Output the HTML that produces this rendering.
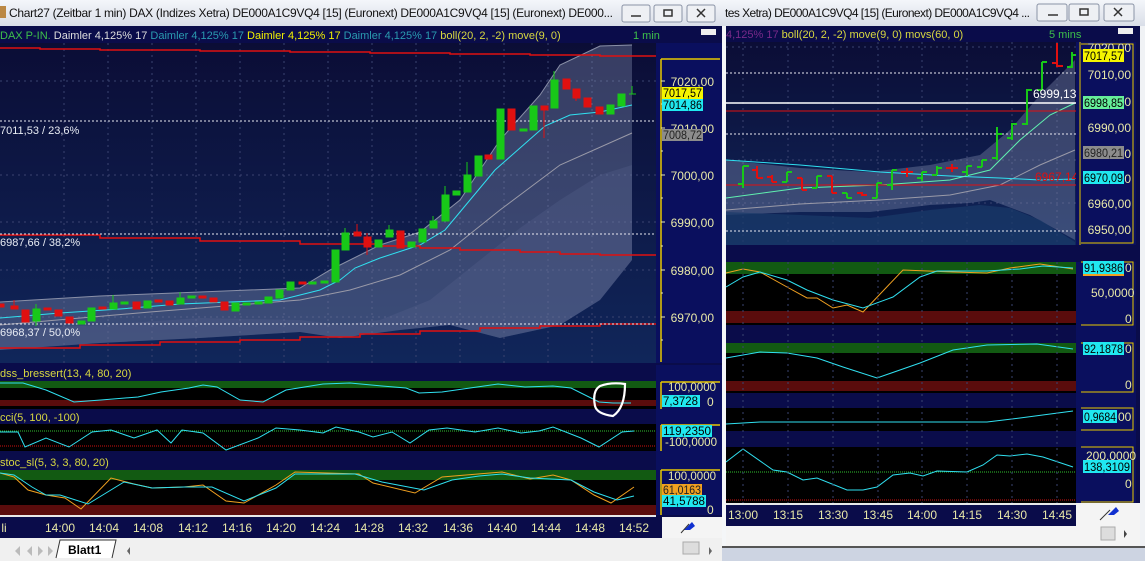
<!DOCTYPE html>
<html><head><meta charset="utf-8"><style>
html,body{margin:0;padding:0;width:1145px;height:561px;overflow:hidden;background:#d6dbe6}
svg{display:block;font-family:"Liberation Sans",sans-serif}
</style></head><body>
<svg width="1145" height="561" viewBox="0 0 1145 561" xmlns="http://www.w3.org/2000/svg">
<defs>
<linearGradient id="tb" x1="0" y1="0" x2="0" y2="1"><stop offset="0" stop-color="#f4f6fa"/><stop offset="1" stop-color="#d9dee8"/></linearGradient>
<linearGradient id="pl" x1="0" y1="0" x2="0" y2="1"><stop offset="0" stop-color="#0b0d36"/><stop offset="1" stop-color="#10265a"/></linearGradient>
</defs>
<!-- LEFT WINDOW -->
<rect x="0" y="0" width="722" height="26" fill="url(#tb)"/>
<rect x="0" y="6" width="6" height="12" fill="#b84"/>
<text x="9" y="17" font-size="12" fill="#111" textLength="604">Chart27 (Zeitbar 1 min)  DAX (Indizes Xetra) DE000A1C9VQ4 [15] (Euronext) DE000A1C9VQ4 [15] (Euronext) DE000...</text>
<g fill="#eef0f4" stroke="#8a93a6"><rect x="622" y="5" width="28" height="17" rx="2"/><rect x="654" y="5" width="28" height="17" rx="2"/><rect x="687" y="5" width="28" height="17" rx="2"/></g>
<path d="M631 16h10M664 10h8v6h-8zM697 9l8 8M705 9l-8 8" stroke="#333" stroke-width="1.5" fill="none"/>
<rect x="0" y="26" width="722" height="512" fill="#0a0c4a"/>
<rect x="0" y="43" width="656" height="320" fill="url(#pl)"/>
<text x="0" y="39" font-size="11"><tspan fill="#3ec04a">DAX P-IN. </tspan><tspan fill="#ddd">Daimler  4,125% 17 </tspan><tspan fill="#2a9bb0">Daimler  4,125% 17 </tspan><tspan fill="#f0f000">Daimler  4,125% 17 </tspan><tspan fill="#2a9bb0">Daimler  4,125% 17 </tspan><tspan fill="#d8d840">boll(20, 2, -2) move(9, 0)</tspan></text>
<text x="633" y="39" font-size="11" fill="#3ec04a">1 min</text>
<rect x="701" y="29" width="15" height="6" fill="#eee"/>
<g stroke="#3a4370" stroke-dasharray="2,4" stroke-width="1">
<path d="M0 81H656M0 175H656M0 222H656M0 270H656M0 317H656"/>
<path d="M64 43V363M108 43V363M152 43V363M196 43V363M240 43V363M284 43V363M328 43V363M372 43V363M416 43V363M460 43V363M504 43V363M548 43V363M592 43V363"/>
</g>
<polygon points="0,302 100,296 200,292 300,288 330,270 380,245 420,232 460,200 500,140 540,95 560,65 600,46 632,45 632,260 600,300 560,325 500,338 450,325 400,330 340,338 300,332 200,338 100,343 0,350" fill="#8c97b8" fill-opacity="0.35"/>
<polygon points="0,330 100,325 200,318 300,320 340,325 380,320 430,300 480,260 520,228 560,200 600,175 632,165 632,260 600,300 560,325 500,338 450,325 400,330 340,338 300,332 200,338 100,343 0,350" fill="#5a6590" fill-opacity="0.3"/>
<polyline points="0,302 100,296 200,292 300,288 330,270 380,245 420,232 460,200 500,140 540,95 560,65 600,46 632,45" fill="none" stroke="#8a90a8"/>
<polyline points="0,325 150,312 300,300 350,290 400,275 450,250 500,210 560,165 632,133" fill="none" stroke="#9a9aa8"/>
<polyline points="0,318 60,313 120,309 180,304 230,302 280,300 320,290 340,280 355,268 380,258 420,245 445,230 470,200 495,170 520,148 545,126 570,115 600,112 632,105" fill="none" stroke="#30e0f0"/>
<path d="M0 48H40V49H100V50H200V51H290V52H370V53H450V54H530V55H600V56H656" stroke="#e01010" stroke-width="1.5" fill="none"/>
<path d="M0 235H100V238H200V241H300V244H380V246H420V248H460V250H520V252H560V254H600V255H656" stroke="#e01010" stroke-width="1.5" fill="none"/>
<path d="M0 348H80V345H160V342H240V340H300V337H360V334H420V331H480V328H540V326H600V324H656" stroke="#e01010" stroke-width="1.5" fill="none"/>
<path d="M0 121H656M0 234H656M0 324H656" stroke="#e8e8f0" stroke-dasharray="2,2"/>
<g font-size="11" fill="#e8ecf4"><text x="0" y="134">7011,53 / 23,6%</text><text x="0" y="246">6987,66 / 38,2%</text><text x="0" y="336">6968,37 / 50,0%</text></g>
<g stroke-width="1">
<g fill="#e01010" stroke="#e01010">
<rect x="-3" y="304" width="7" height="3"/><rect x="11" y="306" width="7" height="3"/><line x1="14" y1="300" x2="14" y2="306"/>
<rect x="22" y="310" width="7" height="12"/><rect x="44" y="308" width="7" height="2"/><rect x="55" y="310" width="7" height="6"/>
<rect x="66" y="317" width="7" height="6"/><rect x="99" y="307" width="7" height="2"/><rect x="133" y="302" width="7" height="7"/>
<rect x="155" y="300" width="7" height="2"/><rect x="166" y="301" width="7" height="4"/><rect x="199" y="296" width="7" height="2"/>
<rect x="210" y="298" width="7" height="4"/><rect x="221" y="302" width="7" height="8"/><rect x="299" y="282" width="7" height="2"/>
<rect x="354" y="232" width="7" height="4"/><line x1="357" y1="224" x2="357" y2="236"/>
<rect x="364" y="237" width="7" height="10"/><line x1="367" y1="233" x2="367" y2="255"/>
<rect x="397" y="231" width="7" height="17"/><rect x="485" y="155" width="7" height="4"/>
<rect x="508" y="109" width="7" height="21"/><rect x="541" y="106" width="7" height="4"/><line x1="544" y1="106" x2="544" y2="138"/>
<rect x="563" y="79" width="7" height="10"/><rect x="573" y="89" width="7" height="9"/><line x1="576" y1="89" x2="576" y2="101"/>
<rect x="584" y="98" width="7" height="9"/><rect x="596" y="107" width="7" height="7"/>
</g>
<g fill="#18c818" stroke="#18c818">
<rect x="33" y="309" width="7" height="12"/><line x1="36" y1="304" x2="36" y2="326"/>
<rect x="78" y="321" width="7" height="3"/><rect x="88" y="308" width="7" height="13"/>
<rect x="110" y="303" width="7" height="6"/><line x1="113" y1="295" x2="113" y2="309"/>
<rect x="121" y="302" width="7" height="2"/><rect x="144" y="301" width="7" height="7"/>
<rect x="177" y="298" width="7" height="6"/><line x1="180" y1="292" x2="180" y2="304"/>
<rect x="188" y="296" width="7" height="2"/><rect x="232" y="303" width="7" height="8"/>
<rect x="243" y="303" width="7" height="2"/><rect x="255" y="302" width="7" height="2"/>
<rect x="265" y="297" width="7" height="6"/><rect x="276" y="290" width="7" height="8"/>
<rect x="287" y="282" width="7" height="8"/><rect x="309" y="282" width="7" height="2"/><rect x="321" y="281" width="7" height="2"/>
<rect x="332" y="250" width="7" height="32"/><rect x="342" y="233" width="7" height="17"/><line x1="345" y1="228" x2="345" y2="250"/>
<rect x="375" y="240" width="7" height="7"/><rect x="386" y="230" width="7" height="7"/><line x1="389" y1="225" x2="389" y2="237"/>
<rect x="408" y="242" width="7" height="5"/><rect x="419" y="229" width="7" height="13"/>
<rect x="430" y="221" width="7" height="7"/><line x1="433" y1="216" x2="433" y2="228"/>
<rect x="442" y="195" width="7" height="26"/><line x1="445" y1="186" x2="445" y2="221"/>
<rect x="453" y="191" width="7" height="4"/><rect x="464" y="175" width="7" height="17"/><line x1="467" y1="162" x2="467" y2="192"/>
<rect x="475" y="156" width="7" height="20"/><rect x="497" y="109" width="7" height="50"/>
<rect x="520" y="129" width="7" height="2"/><rect x="530" y="106" width="7" height="24"/>
<rect x="551" y="80" width="7" height="28"/><line x1="554" y1="71" x2="554" y2="80"/>
<rect x="607" y="105" width="7" height="9"/><rect x="618" y="94" width="7" height="12"/>
<path d="M629 94H636M632 86V94" fill="none"/>
</g></g>
<rect x="656" y="43" width="66" height="320" fill="#0a0f5e"/>
<path d="M661 59H720M661 59V362" stroke="#e8c800" stroke-width="1.5"/>
<g stroke="#e8e8b0"><path d="M661 81h4M661 128h4M661 175h4M661 222h4M661 270h4M661 317h4M661 104h2M661 151h2M661 198h2M661 246h2M661 293h2M661 340h2"/></g>
<g font-size="12" fill="#e8e8a8" text-anchor="end"><text x="714" y="86">7020,00</text><text x="714" y="133">7010,00</text><text x="714" y="180">7000,00</text><text x="714" y="227">6990,00</text><text x="714" y="275">6980,00</text><text x="714" y="322">6970,00</text></g>
<g font-size="12">
<rect x="662" y="87" width="41" height="12" fill="#f4f400"/><text x="663" y="97" fill="#000" textLength="39" lengthAdjust="spacingAndGlyphs">7017,57</text>
<rect x="662" y="99" width="41" height="12" fill="#20e8f0"/><text x="663" y="109" fill="#000" textLength="39" lengthAdjust="spacingAndGlyphs">7014,86</text>
<rect x="662" y="129" width="41" height="12" fill="#8c8c8c"/><text x="663" y="139" fill="#222" textLength="39" lengthAdjust="spacingAndGlyphs">7008,72</text>
</g>
<text x="0" y="377" font-size="11" fill="#d8d840">dss_bressert(13, 4, 80, 20)</text>
<rect x="0" y="381" width="656" height="28" fill="#000"/>
<rect x="0" y="381" width="656" height="7" fill="#125a12"/><rect x="0" y="400" width="656" height="6" fill="#5a0c0c"/>
<polyline points="0,383 23,383 46,390 74,402 101,400 138,397 161,392 189,388 203,385 217,387 240,400 263,402 286,390 323,384 350,383 382,386 406,388 419,393 442,392 498,384 525,387 553,386 571,388 599,402 613,403 631,403" fill="none" stroke="#30e0f0"/>
<path d="M600 386 q-8 5 -5 20 q2 8 18 10 q12 -8 12 -32 q-14 -2 -25 2z" fill="none" stroke="#fff" stroke-width="2.2"/>
<text x="0" y="421" font-size="11" fill="#d8d840">cci(5, 100, -100)</text>
<rect x="0" y="424" width="656" height="27" fill="#000"/>
<path d="M0 431H656" stroke="#30c030" stroke-dasharray="1,1"/><path d="M0 446H656" stroke="#d01010" stroke-dasharray="1,1"/>
<polyline points="0,432 18,432 25,447 46,438 69,447 92,432 111,430 134,438 157,430 171,443 182,430 203,433 226,450 258,438 276,428 300,430 323,433 336,427 359,432 373,437 392,432 410,443 429,430 447,428 475,432 498,428 521,433 539,431 553,427 581,438 599,447 622,432 634,431" fill="none" stroke="#30e0f0"/>
<text x="0" y="466" font-size="11" fill="#d8d840">stoc_sl(5, 3, 3, 80, 20)</text>
<rect x="0" y="470" width="656" height="45" fill="#000"/>
<rect x="0" y="470" width="656" height="10" fill="#125a12"/><rect x="0" y="505" width="656" height="10" fill="#5a0c0c"/>
<polyline points="0,473 14,477 28,490 46,495 65,498 81,509 111,478 134,484 152,488 184,487 203,485 226,501 244,503 276,485 295,472 359,474 373,483 415,493 442,477 502,472 530,479 553,475 571,480 594,495 611,503 634,487" fill="none" stroke="#f0a020"/>
<polyline points="0,473 14,475 32,487 46,495 60,495 88,504 106,493 124,482 152,488 184,487 212,487 244,501 276,488 295,474 355,474 382,482 424,490 452,480 479,476 502,474 530,478 571,480 594,492 617,500 634,496" fill="none" stroke="#30e0f0"/>
<rect x="656" y="365" width="66" height="150" fill="#0a0f5e"/>
<path d="M661 382H720M661 382V409M661 425H720M661 425V451M661 470H720M661 470V515" stroke="#e8c800" stroke-width="1.5"/>
<g font-size="12" fill="#e8e8a8"><text x="668" y="391" textLength="48" lengthAdjust="spacingAndGlyphs">100,0000</text><text x="707" y="406">0</text><text x="665" y="446" textLength="52" lengthAdjust="spacingAndGlyphs">-100,0000</text><text x="668" y="480" textLength="48" lengthAdjust="spacingAndGlyphs">100,0000</text><text x="707" y="514">0</text></g>
<g font-size="12">
<rect x="662" y="395" width="38" height="12" fill="#20e8f0"/><text x="663" y="405" fill="#000" textLength="35" lengthAdjust="spacingAndGlyphs">7,3728</text>
<rect x="662" y="425" width="50" height="12" fill="#20e8f0"/><text x="663" y="435" fill="#000" textLength="48" lengthAdjust="spacingAndGlyphs">119,2350</text>
<rect x="662" y="484" width="40" height="12" fill="#f0a020"/><text x="663" y="494" fill="#222" textLength="38" lengthAdjust="spacingAndGlyphs">61,0163</text>
<rect x="662" y="495" width="44" height="12" fill="#20e8f0"/><text x="663" y="505" fill="#000" textLength="42" lengthAdjust="spacingAndGlyphs">41,5788</text>
</g>
<path d="M0 516H656" stroke="#e8e8e8" stroke-width="2"/>
<g font-size="12" fill="#e8e8a8" text-anchor="middle"><text x="4" y="532">li</text><text x="60" y="532">14:00</text><text x="104" y="532">14:04</text><text x="148" y="532">14:08</text><text x="193" y="532">14:12</text><text x="237" y="532">14:16</text><text x="281" y="532">14:20</text><text x="325" y="532">14:24</text><text x="369" y="532">14:28</text><text x="413" y="532">14:32</text><text x="458" y="532">14:36</text><text x="502" y="532">14:40</text><text x="546" y="532">14:44</text><text x="590" y="532">14:48</text><text x="634" y="532">14:52</text></g>
<rect x="662" y="517" width="60" height="21" fill="#f4f4f4"/>
<path d="M684 530l8-8 3 4-5 4z" fill="#1030d0"/><path d="M681 533l8-9" stroke="#333"/>
<rect x="0" y="538" width="722" height="23" fill="#f0f0f0"/>
<g fill="#bbb"><path d="M12 546v10M20 546l-5 5 5 5zM32 546l-5 5 5 5zM38 546l5 5-5 5zM48 546l5 5-5 5z"/></g>
<path d="M56 558l4-18h56l-4 18" fill="#fff" stroke="#333"/>
<text x="68" y="554" font-size="12" font-weight="bold" fill="#000">Blatt1</text>
<path d="M130 547l-3 4 3 4z" fill="#666"/>
<rect x="683" y="542" width="16" height="12" fill="#ddd" stroke="#aaa"/>
<path d="M709 547l3 4-3 4z" fill="#666"/>
<!-- RIGHT WINDOW -->
<rect x="722" y="0" width="423" height="561" fill="#e6e9ef"/>
<rect x="722" y="0" width="4" height="561" fill="#f4f6f8"/>
<rect x="722" y="0" width="423" height="26" fill="url(#tb)"/>
<text x="725" y="17" font-size="12" fill="#111" textLength="305">tes Xetra) DE000A1C9VQ4 [15] (Euronext) DE000A1C9VQ4 ...</text>
<g fill="#eef0f4" stroke="#8a93a6"><rect x="1037" y="4" width="30" height="17" rx="2"/><rect x="1069" y="4" width="30" height="17" rx="2"/><rect x="1104" y="4" width="30" height="17" rx="2"/></g>
<path d="M1048 15h10M1080 9h8v6h-8zM1114 8l8 8M1122 8l-8 8" stroke="#333" stroke-width="1.5" fill="none"/>
<rect x="726" y="26" width="414" height="500" fill="#0a0c4a"/>
<text x="726" y="38" font-size="11"><tspan fill="#7a2a8a">4,125% 17 </tspan><tspan fill="#d8d840">boll(20, 2, -2) move(9, 0) movs(60, 0)</tspan></text>
<text x="1049" y="38" font-size="11" fill="#3ec04a">5 mins</text>
<rect x="1118" y="28" width="15" height="6" fill="#eee"/>
<rect x="726" y="42" width="350" height="203" fill="url(#pl)"/>
<g stroke="#3a4370" stroke-dasharray="2,4"><path d="M726 47H1076M726 160H1076M726 203H1076M743 42V245M788 42V245M833 42V245M878 42V245M922 42V245M967 42V245M1012 42V245M1057 42V245"/></g>
<polygon points="726,160 800,168 870,172 930,165 980,155 1010,130 1040,95 1075,60 1075,240 1030,215 990,200 970,203 930,205 870,212 800,212 726,215" fill="#8c97b8" fill-opacity="0.35"/>
<polygon points="726,212 800,215 870,218 930,210 980,205 1010,208 1040,220 1075,242 1075,245 726,245" fill="#1a3a6a" fill-opacity="0.7"/>
<polyline points="726,210 800,204 880,200 950,195 1000,185 1040,165 1075,150" fill="none" stroke="#9a9aa8"/>
<polyline points="726,160 800,165 880,172 950,176 1000,178 1040,180 1075,179" fill="none" stroke="#30e0f0"/>
<polyline points="726,198 800,188 880,185 950,180 990,170 1020,140 1050,115 1075,103" fill="none" stroke="#60f0b0"/>
<path d="M726 73H1076M726 134H1076M726 185H1076M726 231H1076" stroke="#e8e8f0" stroke-dasharray="2,2"/>
<path d="M726 103H1076" stroke="#fff" stroke-width="1.5"/><path d="M726 111H1076M726 185H1076" stroke="#e01010"/>
<g stroke-width="2" fill="none">
<path stroke="#18c818" d="M743 166V188M738 184h5M743 166h6M787 172V182M782 182h5M787 172h5M817 176V188M812 188h5M817 176h5M847 193V198M842 193h5M847 198h5M877 183V198M872 198h5M877 183h5M892 170V190M887 185h5M892 170h5M922 172V181M917 178h5M922 172h5M937 166V175M932 175h5M937 168h5M967 166V176M962 172h5M967 166h5M982 160V167M977 167h5M982 160h5M997 127V160M992 158h5M997 134h5M1012 123V140M1007 138h5M1012 124h5M1027 89V125M1022 124h5M1027 90h5M1042 62V90M1037 90h5M1042 62h5M1072 52V68M1067 67h5M1072 55h5"/>
<path stroke="#e01010" d="M757 166V178M752 170h5M757 178h6M772 175V182M767 177h5M772 182h5M802 178V190M797 178h5M802 190h5M832 176V193M827 176h5M832 193h5M862 192V196M857 193h5M862 195h5M907 168V177M901 172h12M952 164V172M946 168h12M1057 43V67M1052 63h5M1057 66h6"/>
</g>
<text x="1033" y="98" font-size="12" fill="#fff">6999,13</text>
<text x="1035" y="181" font-size="12" fill="#e01010">6967,14</text>
<rect x="1076" y="42" width="60" height="203" fill="#0a0f5e"/>
<path d="M1080 42V245M1081 44H1133V243H1081" stroke="#e8c800" stroke-width="1" fill="none"/>
<g font-size="12" fill="#e8e8a8" text-anchor="end"><text x="1131" y="52">7020,00</text><text x="1131" y="79">7010,00</text><text x="1131" y="132">6990,00</text><text x="1131" y="208">6960,00</text><text x="1131" y="234">6950,00</text><text x="1131" y="106">00</text><text x="1131" y="158">0</text><text x="1131" y="183">0</text></g>
<g font-size="12">
<rect x="1083" y="49" width="41" height="13" fill="#f4f400"/><text x="1084" y="60" fill="#000" textLength="39" lengthAdjust="spacingAndGlyphs">7017,57</text>
<rect x="1083" y="96" width="41" height="13" fill="#66ee99"/><text x="1084" y="107" fill="#000" textLength="39" lengthAdjust="spacingAndGlyphs">6998,85</text>
<rect x="1083" y="146" width="41" height="13" fill="#8c8c8c"/><text x="1084" y="157" fill="#222" textLength="39" lengthAdjust="spacingAndGlyphs">6980,21</text>
<rect x="1083" y="171" width="41" height="13" fill="#20e8f0"/><text x="1084" y="182" fill="#000" textLength="39" lengthAdjust="spacingAndGlyphs">6970,09</text>
</g>
<rect x="726" y="262" width="350" height="63" fill="#000"/>
<rect x="726" y="262" width="350" height="12" fill="#125a12"/><rect x="726" y="311" width="350" height="12" fill="#5a0c0c"/>
<polyline points="726,273 743,269 760,272 787,287 807,298 817,298 833,308 847,305 863,312 903,270 953,272 987,273 1010,268 1040,264 1073,269" fill="none" stroke="#f0a020"/>
<polyline points="726,287 743,277 760,272 787,280 807,290 833,300 863,308 893,297 920,277 937,271 987,271 1020,269 1043,266 1073,268" fill="none" stroke="#30e0f0"/>
<rect x="726" y="343" width="350" height="50" fill="#000"/>
<rect x="726" y="343" width="350" height="10" fill="#125a12"/><rect x="726" y="381" width="350" height="10" fill="#5a0c0c"/>
<polyline points="726,358 760,352 787,353 817,358 843,367 877,378 920,363 953,350 987,345 1037,344 1073,349" fill="none" stroke="#30e0f0"/>
<rect x="726" y="408" width="350" height="23" fill="#000"/>
<polyline points="726,424 760,422 820,422 987,422 1020,418 1073,411" fill="none" stroke="#30e0f0"/>
<rect x="726" y="447" width="350" height="56" fill="#000"/>
<path d="M726 472H1076" stroke="#30c030" stroke-dasharray="1,1"/><path d="M726 500H1076" stroke="#d01010" stroke-dasharray="1,1"/>
<polyline points="726,462 743,449 773,470 787,472 803,480 817,478 847,490 863,490 877,487 893,475 910,473 923,476 937,471 967,472 983,465 997,455 1010,456 1027,454 1043,457 1073,467" fill="none" stroke="#30e0f0"/>
<g stroke="#3a4370" stroke-dasharray="2,4"><path d="M743 262V503M788 262V503M833 262V503M878 262V503M922 262V503M967 262V503M1012 262V503M1057 262V503"/></g>
<rect x="1076" y="262" width="60" height="241" fill="#0a0f5e"/>
<path d="M1081 262H1133V325H1081M1081 343H1133V392H1081M1081 408H1133V430H1081M1081 447H1133V502H1081" stroke="#e8c800" fill="none"/>
<g font-size="12" fill="#e8e8a8"><text x="1091" y="297">50,0000</text><text x="1125" y="323">0</text><text x="1125" y="389">0</text><text x="1086" y="460">200,0000</text><text x="1125" y="488">0</text></g>
<g font-size="12">
<rect x="1083" y="261" width="41" height="13" fill="#20e8f0"/><rect x="1083" y="274" width="41" height="2" fill="#f0a020"/><text x="1084" y="272" fill="#000" textLength="39" lengthAdjust="spacingAndGlyphs">91,9386</text><text x="1125" y="272" fill="#e8e8a8">0</text>
<rect x="1083" y="342" width="41" height="13" fill="#20e8f0"/><text x="1084" y="353" fill="#000" textLength="39" lengthAdjust="spacingAndGlyphs">92,1878</text><text x="1125" y="353" fill="#e8e8a8">0</text>
<rect x="1083" y="410" width="34" height="13" fill="#20e8f0"/><text x="1084" y="421" fill="#000" textLength="32" lengthAdjust="spacingAndGlyphs">0,9684</text><text x="1118" y="421" fill="#e8e8a8">00</text>
<rect x="1083" y="460" width="48" height="13" fill="#20e8f0"/><text x="1084" y="471" fill="#000" textLength="46" lengthAdjust="spacingAndGlyphs">138,3109</text>
</g>
<path d="M726 504H1076" stroke="#e8e8e8" stroke-width="2"/>
<g font-size="12" fill="#e8e8a8" text-anchor="middle"><text x="743" y="519">13:00</text><text x="788" y="519">13:15</text><text x="833" y="519">13:30</text><text x="878" y="519">13:45</text><text x="922" y="519">14:00</text><text x="967" y="519">14:15</text><text x="1012" y="519">14:30</text><text x="1057" y="519">14:45</text></g>
<rect x="1076" y="503" width="64" height="23" fill="#f4f4f4"/>
<path d="M1108 515l8-8 3 4-5 4z" fill="#1030d0"/><path d="M1100 520l10-10" stroke="#333"/>
<rect x="726" y="526" width="414" height="20" fill="#f4f4f4"/>
<rect x="1101" y="527" width="14" height="13" fill="#ddd" stroke="#aaa"/><path d="M1124 530l3 4-3 4z" fill="#444"/>
<rect x="722" y="546" width="423" height="2" fill="#555"/>
<rect x="722" y="548" width="423" height="13" fill="#cdd4e2"/>
<rect x="1140" y="26" width="5" height="520" fill="#f0f2f5"/>
</svg>
</body></html>
